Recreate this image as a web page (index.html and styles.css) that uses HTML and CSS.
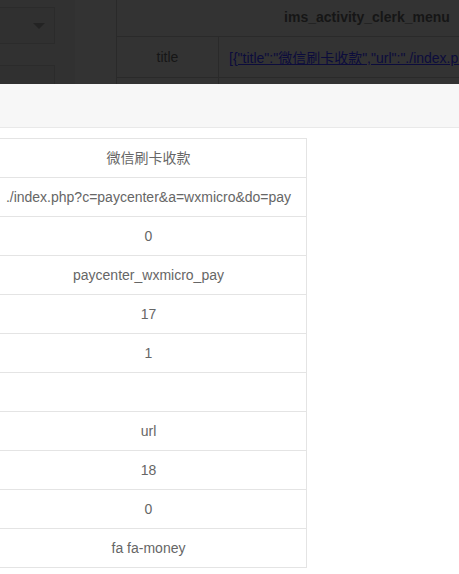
FILE: index.html
```html
<!DOCTYPE html>
<html>
<head>
<meta charset="utf-8">
<link rel="stylesheet" href="styles.css">
</head>
<body>
<div class="backdrop">
  <div class="side">
    <div class="select"><span class="caret"></span></div>
    <div class="select second"></div>
  </div>
  <div class="gutter"></div>
  <div class="dwrap">
    <table class="dtable">
      <colgroup><col class="c1"><col class="c2"></colgroup>
      <tr><th colspan="2" class="dhead">ims_activity_clerk_menu</th></tr>
      <tr><td class="dkey">title</td><td class="dval"><a class="dlink">[{"title":"微信刷卡收款","url":"./index.php?c=paycenter&amp;a=wxmicro&amp;do=pay"}]</a></td></tr>
      <tr><td class="dkey"></td><td class="dval"></td></tr>
    </table>
  </div>
</div>
<div class="modal">
  <div class="modal-head"></div>
  <div class="modal-body">
    <table class="kv">
      <tr><td>微信刷卡收款</td></tr>
      <tr><td>./index.php?c=paycenter&amp;a=wxmicro&amp;do=pay</td></tr>
      <tr><td>0</td></tr>
      <tr><td>paycenter_wxmicro_pay</td></tr>
      <tr><td>17</td></tr>
      <tr><td>1</td></tr>
      <tr><td></td></tr>
      <tr><td>url</td></tr>
      <tr><td>18</td></tr>
      <tr><td>0</td></tr>
      <tr><td>fa fa-money</td></tr>
    </table>
  </div>
</div>
</body>
</html>
```
FILE: styles.css
```css
html, body {
  margin: 0;
  padding: 0;
  background: #ffffff;
  font-family: "Liberation Sans", Arial, "Noto Sans CJK SC", sans-serif;
  font-size: 14px;
}
.backdrop {
  display: flex;
  height: 84px;
  overflow: hidden;
  background: #333333;
}
.side {
  width: 75px;
  flex: none;
  background: #313131;
  padding-top: 7px;
  box-sizing: border-box;
}
.select {
  width: 55px;
  height: 37px;
  box-sizing: border-box;
  border: 1px solid #2b2b2b;
  border-left: none;
  background: #303030;
  display: flex;
  align-items: center;
  justify-content: flex-end;
  padding-right: 9px;
}
.select.second {
  margin-top: 21px;
}
.caret {
  width: 0;
  height: 0;
  border-left: 6px solid transparent;
  border-right: 6px solid transparent;
  border-top: 6px solid #232323;
}
.gutter {
  width: 41px;
  flex: none;
  background: #333333;
}
.dwrap {
  flex: none;
  width: 502px;
}
.dtable {
  border-collapse: collapse;
  width: 502px;
  table-layout: fixed;
  margin-top: -3px;
}
.c1 {
  width: 102px;
}
.dtable th, .dtable td {
  border: 1px solid #2a2a2a;
  color: #161616;
  padding: 0;
}
.dhead {
  height: 39px;
  font-weight: bold;
  font-size: 14px;
  text-align: center;
}
.dtable tr:first-child th {
  border-top: none;
}
.dkey {
  height: 40px;
  text-align: center;
}
.dval {
  padding-left: 10px !important;
  white-space: nowrap;
  overflow: hidden;
  text-align: left;
}
.dlink {
  color: #0c0c3c;
  text-decoration: underline;
}
.modal-head {
  height: 43px;
  background: #f7f7f7;
  border-bottom: 1px solid #e9e9e9;
}
.modal-body {
  padding-top: 10px;
}
.kv {
  border-collapse: collapse;
  width: 317px;
  margin-left: -10px;
}
.kv td {
  border: 1px solid #e4e4e4;
  height: 38px;
  padding: 0;
  text-align: center;
  color: #666666;
  line-height: 20px;
}
```
